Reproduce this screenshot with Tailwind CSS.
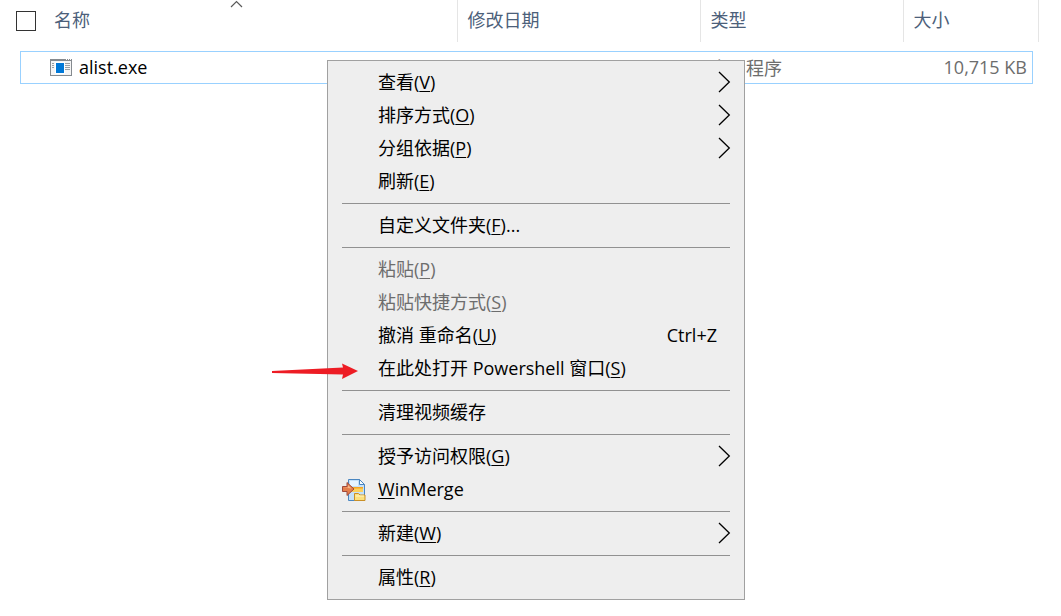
<!DOCTYPE html>
<html lang="zh-CN">
<head>
<meta charset="utf-8">
<title>alist</title>
<script src="https://cdn.jsdelivr.net/npm/@tailwindcss/browser@4"></script>
</head>
<body class="relative min-h-screen bg-white font-['Open_Sans','Noto_Sans_CJK_SC',sans-serif] text-[18px] leading-6 text-black">
<svg width="0" height="0" class="absolute" aria-hidden="true">
  <symbol id="chev" viewBox="0 0 13 22"><path d="M1 1 11.300 11 1 21" fill="none" stroke="#000" stroke-width="1.300"/></symbol>
</svg>

<main>
  <table class="w-full table-fixed border-collapse">
    <colgroup><col class="w-[457px]"><col class="w-[243px]"><col class="w-[203px]"><col class="w-[135px]"><col></colgroup>
    <thead class="text-left text-[#4c607a]">
      <tr class="h-[42px]">
        <th scope="col" class="relative border-r border-[#e5e5e5] p-0 font-normal">
          <div class="flex items-center gap-[18px] pl-4">
            <input type="checkbox" aria-label="全选" class="size-5 appearance-none border border-[#333] bg-white">
            <span class="pb-[2px]">名称</span>
          </div>
          <svg class="absolute top-0 left-[230px]" width="13" height="8" viewBox="0 0 13 8" aria-hidden="true"><path d="M1 7 6.500 1.500 12 7" fill="none" stroke="#5a5a5a" stroke-width="1.200"/></svg>
        </th>
        <th scope="col" class="border-r border-[#e5e5e5] p-0 pb-[2px] pl-[10px] font-normal">修改日期</th>
        <th scope="col" class="border-r border-[#e5e5e5] p-0 pb-[2px] pl-[10px] font-normal">类型</th>
        <th scope="col" class="border-r border-[#e5e5e5] p-0 pb-[2px] pl-[10px] font-normal">大小</th>
        <td></td>
      </tr>
    </thead>
    <tbody class="text-[#6d6d6d]">
      <tr>
        <td class="p-0 pt-[9px] pl-5">
          <div class="flex h-[33px] items-center gap-[7px] border-y border-l border-[#99d1ff] pl-[29px] text-black">
            <svg width="22" height="17" viewBox="0 0 22 17" aria-hidden="true" shape-rendering="crispEdges">
              <rect x=".5" y=".5" width="21" height="16" fill="#f5f5f5" stroke="#858a8f"/>
              <rect x="0" y="0" width="22" height="2" fill="#858a8f"/>
              <path d="M16 1h1M18 1h1M20 1h1" transform="translate(0 -.5)" stroke="#fff"/>
              <path d="M2 4.500h2M2 6.500h2M2 8.500h2M15 4.500h5M15 6.500h5M15 8.500h5M15 10.500h5" stroke="#9a9fa3"/>
              <rect x="5" y="3" width="10" height="12" fill="#fff"/>
              <rect x="6" y="4" width="8" height="10" fill="#0078d7"/>
            </svg>
            <span class="pb-[2px]">alist.exe</span>
          </div>
        </td>
        <td class="p-0 pt-[9px]"><div class="h-[33px] border-y border-[#99d1ff]"></div></td>
        <td class="p-0 pt-[9px]"><div class="flex h-[33px] items-center border-y border-[#99d1ff] pl-[10px]">应用程序</div></td>
        <td class="p-0 pt-[9px] pr-[5px]"><div class="flex h-[33px] items-center justify-end border-y border-r border-[#99d1ff] pr-[5px] pb-[2px]">10,715 KB</div></td>
        <td></td>
      </tr>
    </tbody>
  </table>
</main>

<div role="menu" class="absolute top-[60px] left-[327px] flex w-[418px] flex-col border border-[#a0a0a0] bg-[#eeeeee] py-[5px]">
  <button role="menuitem" class="flex h-[33px] items-center justify-between pr-[13px] pb-[2px] pl-[50px]"><span>查看(<u class="decoration-1 underline-offset-2">V</u>)</span><svg width="13" height="22"><use href="#chev"/></svg></button>
  <button role="menuitem" class="flex h-[33px] items-center justify-between pr-[13px] pb-[2px] pl-[50px]"><span>排序方式(<u class="decoration-1 underline-offset-2">O</u>)</span><svg width="13" height="22"><use href="#chev"/></svg></button>
  <button role="menuitem" class="flex h-[33px] items-center justify-between pr-[13px] pb-[2px] pl-[50px]"><span>分组依据(<u class="decoration-1 underline-offset-2">P</u>)</span><svg width="13" height="22"><use href="#chev"/></svg></button>
  <button role="menuitem" class="flex h-[33px] items-center pb-[2px] pl-[50px]"><span>刷新(<u class="decoration-1 underline-offset-2">E</u>)</span></button>
  <hr class="mx-[14px] my-[5px] border-t border-[#919191]">
  <button role="menuitem" class="flex h-[33px] items-center pb-[2px] pl-[50px]"><span>自定义文件夹(<u class="decoration-1 underline-offset-2">F</u>)...</span></button>
  <hr class="mx-[14px] my-[5px] border-t border-[#919191]">
  <button role="menuitem" disabled class="flex h-[33px] items-center pb-[2px] pl-[50px] text-[#6d6d6d]"><span>粘贴(<u class="decoration-1 underline-offset-2">P</u>)</span></button>
  <button role="menuitem" disabled class="flex h-[33px] items-center pb-[2px] pl-[50px] text-[#6d6d6d]"><span>粘贴快捷方式(<u class="decoration-1 underline-offset-2">S</u>)</span></button>
  <button role="menuitem" class="flex h-[33px] items-center justify-between pr-[27px] pb-[2px] pl-[50px]"><span>撤消 重命名(<u class="decoration-1 underline-offset-2">U</u>)</span><span>Ctrl+Z</span></button>
  <button role="menuitem" class="flex h-[33px] items-center pb-[2px] pl-[50px]"><span>在此处打开 Powershell 窗口(<u class="decoration-1 underline-offset-2">S</u>)</span></button>
  <hr class="mx-[14px] my-[5px] border-t border-[#919191]">
  <button role="menuitem" class="flex h-[33px] items-center pb-[2px] pl-[50px]"><span>清理视频缓存</span></button>
  <hr class="mx-[14px] my-[5px] border-t border-[#919191]">
  <button role="menuitem" class="flex h-[33px] items-center justify-between pr-[13px] pb-[2px] pl-[50px]"><span>授予访问权限(<u class="decoration-1 underline-offset-2">G</u>)</span><svg width="13" height="22"><use href="#chev"/></svg></button>
  <button role="menuitem" class="flex h-[33px] items-center gap-3 pl-[14px]">
    <svg width="24" height="24" viewBox="0 0 24 24" aria-hidden="true">
      <path d="M6.500 1.500h11l5 5v16h-16z" fill="#c4e0f8" stroke="#4a86c0"/>
      <path d="M8 3h8v5H8z" fill="#e6f4ff"/>
      <path d="M17.500 1.500v5h5z" fill="#f4faff" stroke="#4a86c0"/>
      <path d="M10 9h11v5H10z" fill="#fbd05c"/><path d="M10 9h11v1.500H10z" fill="#f5a623"/>
      <path d="M.5 8.500h4.500v-4l7 6.500-7 6.500v-4H.5z" fill="#e57f4c" stroke="#a04a3c"/>
      <path d="M1.500 9.500H6V7l3.500 3.500z" fill="#f8b88a"/>
      <path d="M12.500 15.500h4l1.500 1.500h5v5.500H12.500z" fill="#fbe07c" stroke="#c98f26"/>
      <path d="M13.500 18h8.500" stroke="#fff6c4"/>
    </svg>
    <span class="pb-[2px]"><u class="decoration-1 underline-offset-2">W</u>inMerge</span>
  </button>
  <hr class="mx-[14px] my-[5px] border-t border-[#919191]">
  <button role="menuitem" class="flex h-[33px] items-center justify-between pr-[13px] pb-[2px] pl-[50px]"><span>新建(<u class="decoration-1 underline-offset-2">W</u>)</span><svg width="13" height="22"><use href="#chev"/></svg></button>
  <hr class="mx-[14px] my-[5px] border-t border-[#919191]">
  <button role="menuitem" class="flex h-[33px] items-center pb-[2px] pl-[50px]"><span>属性(<u class="decoration-1 underline-offset-2">R</u>)</span></button>
</div>

<svg class="absolute top-[362px] left-[271px]" width="88" height="18" viewBox="0 0 88 18" aria-hidden="true"><path d="M1 9 72 5.500 71 1.500 87 9 71 17l1-4.500L1 11z" fill="#ed1c24"/></svg>
</body>
</html>
